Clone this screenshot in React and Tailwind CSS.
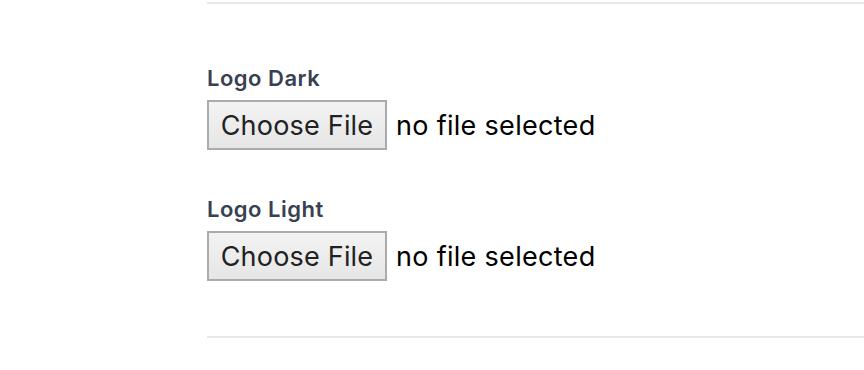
import React from 'react'

function FileField({ label }) {
  return (
    <div>
      <label className="block text-[22px] leading-[30px] font-semibold tracking-[0.5px] text-[#374151]">{label}</label>
      <div className="mt-[7px] flex items-center">
        <button className="h-[50px] w-[180px] border-2 border-[#ababab] bg-gradient-to-b from-[#f3f3f3] to-[#e6e6e6] text-[27px] tracking-[0.2px] text-[#222] leading-none">
          Choose File
        </button>
        <span className="ml-[9px] text-[27px] tracking-[0.3px] text-black leading-none">no file selected</span>
      </div>
    </div>
  )
}

export default function App() {
  return (
    <div className="h-[370px] w-[864px] bg-white pl-[207px] pt-[2px]" style={{ fontFamily: 'Inter, "Noto Sans", sans-serif' }}>
      <div className="border-y-2 border-[#e7e7ee] pt-[59px] pb-[55px] flex flex-col gap-[44px]">
        <FileField label="Logo Dark" />
        <FileField label="Logo Light" />
      </div>
    </div>
  )
}
